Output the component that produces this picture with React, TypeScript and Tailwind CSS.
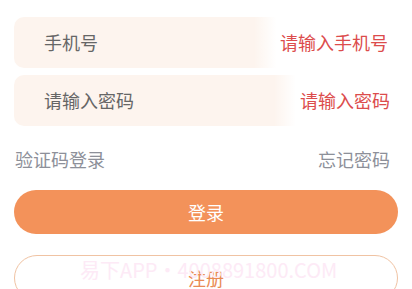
import React from "react";

const font = { fontFamily: '"Noto Sans CJK SC", "Noto Sans", sans-serif' };

const Field: React.FC<{ label: string; error: string; fade: string }> = ({
  label,
  error,
  fade,
}) => (
  <div className="relative flex h-[51px] items-center rounded-[10px] bg-[#fdf4ee] pl-[30px]">
    <span className="text-[18px] text-[#666666]">{label}</span>
    <div
      className={`absolute inset-y-0 right-0 flex items-center justify-end bg-gradient-to-r from-[#fdf4ee]/0 via-white to-white ${fade}`}
    >
      <span className="text-[18px] text-[#dc4c4c]">{error}</span>
    </div>
  </div>
);

export default function App() {
  return (
    <div className="relative h-[289px] w-[412px] overflow-hidden bg-white" style={font}>
      <div className="flex flex-col px-[14px] pt-[17px]">
        <div className="mr-[4px] flex flex-col gap-[7px]">
          <Field label="手机号" error="请输入手机号" fade="w-[140px] via-[16%] pr-[6px]" />
          <Field label="请输入密码" error="请输入密码" fade="w-[120px] via-[18%] pr-[4px]" />
        </div>

        <div className="mt-[21px] flex items-center justify-between pr-[8px] text-[18px] leading-[24px] text-[#8d9099]">
          <span className="ml-[1px]">验证码登录</span>
          <span>忘记密码</span>
        </div>

        <button className="mt-[19px] flex h-[44px] items-center justify-center rounded-full bg-[#f3925a] text-[18px] text-white">
          登录
        </button>

        <button className="mt-[21px] flex h-[46px] items-start justify-center rounded-full border-[1.5px] border-[#f0c3a3] pt-[10px] text-[18px] leading-[24px] text-[#e98b55]">
          注册
        </button>
      </div>

      <div className="pointer-events-none absolute left-[80px] top-[257px] text-[20px] leading-[26px] text-[#fdeaf6]">
        易下APP・4008891800.COM
      </div>
    </div>
  );
}
